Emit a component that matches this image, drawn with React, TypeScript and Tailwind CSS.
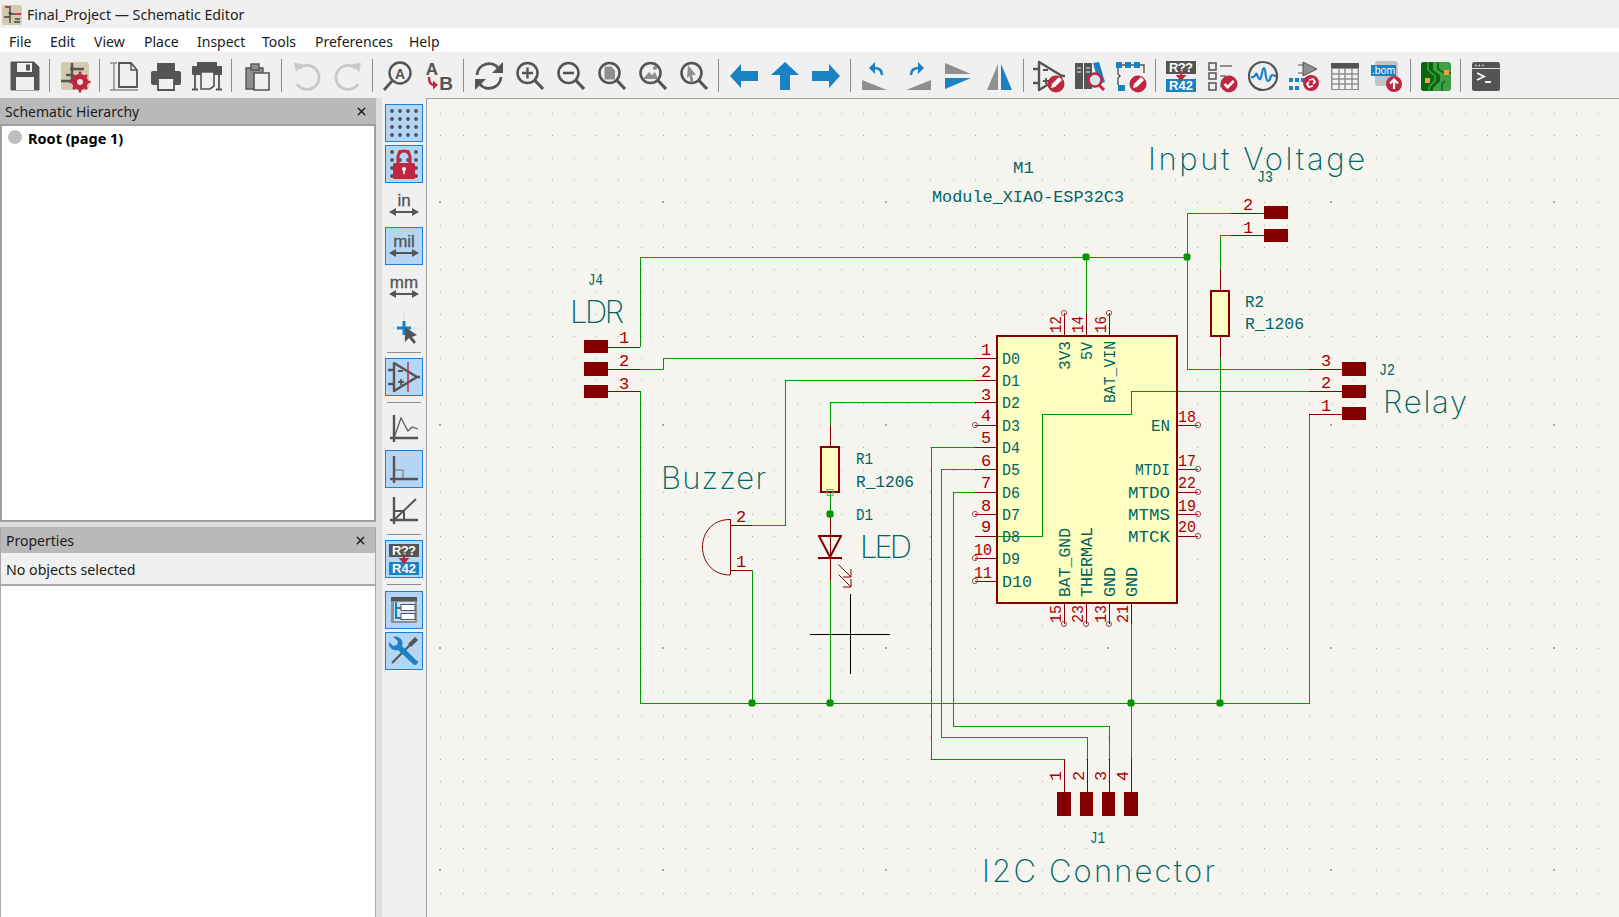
import React from "react";
import { X } from "lucide-react";

const D = "#545454", G = "#8f8f8f", B = "#1a81c4", R = "#bf2641", W = "#009600", P = "#840000", TC = "#006464", N = "#a90000", L = "#c8c8c8", BG = "#f0f0f0";

const Svg = ({ children, s = 32 }: { children: React.ReactNode; s?: number }) => (
  <svg width={s} height={s} viewBox="0 0 32 32" fill="none" className="overflow-visible">{children}</svg>
);
const Mag = ({ children }: { children?: React.ReactNode }) => (
  <Svg>
    <circle cx="13.5" cy="13" r="10" stroke={D} strokeWidth="2.6" />
    <path d="M21 20.5 29 29" stroke={D} strokeWidth="3.2" />
    {children}
  </Svg>
);
const Badge = ({ x = 23, y = 24, r = 8.5 }: { x?: number; y?: number; r?: number }) => (
  <circle cx={x} cy={y} r={r} fill={R} />
);
const Pencil = () => (
  <>
    <Badge />
    <path d="M18 28l1-4 7-7 3 3-7 7z" fill="#fff" />
  </>
);
const Check = () => (
  <>
    <Badge />
    <path d="M18.500 24l3.200 3.200 6-6.200" stroke="#fff" strokeWidth="2.600" />
  </>
);
const IconText = ({ x, y, s, c, w = 700, children, l }: { x: number; y: number; s: number; c: string; w?: number; children: React.ReactNode; l?: number }) => (
  <text x={x} y={y} fontSize={s} fill={c} fontWeight={w} fontFamily="Liberation Sans" textAnchor="middle" textLength={l}>{children}</text>
);
const Annot = () => (
  <Svg>
    <rect x="1" y="1" width="30" height="13" fill={D} />
    <IconText x={16} y={12} s={13} c="#fff" l={24}>R??</IconText>
    <rect x="1" y="19" width="30" height="13" fill={B} />
    <IconText x={16} y={30} s={13} c="#fff" l={24}>R42</IconText>
    <path d="M16 11v7" stroke={R} strokeWidth="2" />
    <path d="M10.500 15h11L16 21z" fill={R} />
  </Svg>
);
const Opamp = ({ red }: { red?: boolean }) => (
  <>
    <path d="M6 2 6 30 29 16z" stroke={D} strokeWidth="2.400" strokeLinejoin="round" />
    <path d="M0 9h6M0 23h6M29 16h3" stroke={D} strokeWidth="2.400" />
    <path d="M10 10h5M10 21h6M13 18v6" stroke={D} strokeWidth="1.800" />
    {red && <path d="M20 1v30" stroke={R} strokeWidth="1.400" />}
  </>
);

const top: (React.ReactNode | "sep")[] = [
  <Svg><path d="M2 2h23l5 5v23H2z" fill={D} stroke={D} strokeLinejoin="round" /><rect x="8" y="3" width="15" height="9" fill={BG} /><rect x="17" y="4.500" width="4" height="6" fill={D} /><rect x="7" y="17" width="18" height="13" fill={BG} /></Svg>,
  "sep",
  <Svg><rect x="2" y="2" width="28" height="28" rx="3" fill="#d4cab0" /><path d="M13 3v20M2 21h12M13 9h12M7 15h6" stroke={D} strokeWidth="2.400" /><circle cx="13" cy="9" r="2" fill={D} /><circle cx="13" cy="21" r="2" fill={D} /><circle cx="21" cy="22" r="8" fill={R} /><path d="M21 11.500v21M10.500 22h21M14 15l14 14M28 15 14 29" stroke={R} strokeWidth="2.600" /><circle cx="21" cy="22" r="3" fill="#f0e0e0" /></Svg>,
  "sep",
  <Svg><path d="M5 3v27M1 3h7M1 30h28" stroke={G} strokeWidth="1.500" /><path d="M10 3h12l6 7v17H10z" stroke={D} strokeWidth="1.800" /><path d="M22 3v7h6" stroke={D} strokeWidth="1.500" /></Svg>,
  <Svg><path d="M7 11V3h18v8" fill={D} /><path d="M3 11h26a2 2 0 0 1 2 2v10a2 2 0 0 1-2 2H3a2 2 0 0 1-2-2V13a2 2 0 0 1 2-2z" fill={D} /><path d="M8 18h16v12H8z" fill={BG} stroke={D} strokeWidth="1.800" /></Svg>,
  <Svg><rect x="1" y="6" width="30" height="9" fill={D} rx="1" /><path d="M6 6V2h20v4" fill={D} /><path d="M4 15v14M28 15v14M1 29.500h6M25 29.500h6" stroke={D} strokeWidth="1.800" /><path d="M10 12h13v14l-4 3h-9z" fill={BG} stroke={D} strokeWidth="1.600" /></Svg>,
  "sep",
  <Svg><path d="M5 8h17v21H5z" fill={G} stroke={D} strokeWidth="1.400" /><rect x="10" y="4" width="8" height="6" fill={G} stroke={D} strokeWidth="1.400" /><path d="M13 13h15v17H13z" fill={BG} stroke={D} strokeWidth="1.600" /></Svg>,
  "sep",
  <Svg><path d="M8 8.500A12 12 0 1 1 6 24" stroke={L} strokeWidth="2.800" /><path d="M3 3l9 1-7 8z" fill={L} /></Svg>,
  <Svg><path d="M24 8.500A12 12 0 1 0 26 24" stroke={L} strokeWidth="2.800" /><path d="M29 3l-9 1 7 8z" fill={L} /></Svg>,
  "sep",
  <Svg><circle cx="18" cy="13" r="10.500" stroke={D} strokeWidth="2.400" /><IconText x={18} y={18.500} s={14} c={D}>A</IconText><path d="M10 21 2 30" stroke={D} strokeWidth="2.800" /></Svg>,
  <Svg><IconText x={9} y={15} s={17} c={D}>A</IconText><IconText x={23} y={30} s={19} c={D}>B</IconText><path d="M6 17c0 6 2 8 5 8" stroke={R} strokeWidth="2.400" /><path d="M10 20.500l5 4.500-5 4.500z" fill={R} /></Svg>,
  "sep",
  <Svg><path d="M4 15A12 12 0 0 1 26 9" stroke={D} strokeWidth="2.800" /><path d="M30 2v11H19z" fill={D} /><path d="M28 17A12 12 0 0 1 6 23" stroke={D} strokeWidth="2.800" /><path d="M2 30V19h11z" fill={D} /></Svg>,
  <Mag><path d="M13.500 7.500v11M8 13h11" stroke={D} strokeWidth="2.400" /></Mag>,
  <Mag><path d="M8 13h11" stroke={D} strokeWidth="2.600" /></Mag>,
  <Mag><path d="M8.500 6.500h7l3.500 4v9H8.500z" fill={G} /></Mag>,
  <Mag><path d="M6 19l6-7 3 3 3-3 3 7z" fill={G} /><circle cx="18" cy="8" r="2" fill={G} /></Mag>,
  <Mag><path d="M10 5l8 10h-4l1.500 6-3 .5-1-5.500-2.500 2z" fill={G} /></Mag>,
  "sep",
  <Svg><path d="M2 16 13 4v7h17v10H13v7z" fill={B} /></Svg>,
  <Svg><path d="M16 2 30 15h-9v15H11V15H2z" fill={B} /></Svg>,
  <Svg><path d="M30 16 19 4v7H2v10h17v7z" fill={B} /></Svg>,
  "sep",
  <Svg><path d="M2 20 27 30H2z" fill={G} /><path d="M22 15c0-5-3-7-8-7" stroke={B} strokeWidth="2.600" /><path d="M15 2 9 8l6 6z" fill={B} /></Svg>,
  <Svg><path d="M30 20 5 30h25z" fill={G} /><path d="M10 15c0-5 3-7 8-7" stroke={B} strokeWidth="2.600" /><path d="M17 2l6 6-6 6z" fill={B} /></Svg>,
  <Svg><path d="M3 3v11h26z" fill={G} /><path d="M3 29V18h26z" fill={B} /></Svg>,
  <Svg><path d="M15 4v26H4z" fill={G} /><path d="M18 4v26h11z" fill={B} /></Svg>,
  "sep",
  <Svg><Opamp /><Pencil /></Svg>,
  <Svg><rect x="1" y="3" width="8" height="26" fill={D} /><rect x="10" y="3" width="8" height="26" fill={D} /><path d="M3 8h4M3 12h4M12 8h4M12 12h4" stroke={BG} strokeWidth="1.200" /><path d="M19 3l6-1 6 20-6 2z" fill={B} /><circle cx="21" cy="20" r="6.500" fill="#d8e8f2" stroke={R} strokeWidth="2.600" /><path d="M25 25l5 5" stroke={R} strokeWidth="3" /></Svg>,
  <Svg><rect x="1" y="2" width="6" height="6" fill={B} /><rect x="10" y="2" width="6" height="6" fill={B} /><rect x="19" y="2" width="6" height="6" fill={B} /><rect x="3" y="25" width="7" height="6" fill={B} /><path d="M3 8v6l2 2-2 2v7M25 5h4v8M7 5h3M16 5h3" stroke={D} strokeWidth="1.400" /><Pencil /></Svg>,
  "sep",
  <Annot />,
  <Svg><path d="M3 3h7v7H3zM3 13h7v6H3zM3 23h7v7H3z" stroke={D} strokeWidth="1.500" /><path d="M14 6h12M14 16h6M14 26h4" stroke={G} strokeWidth="2" /><Check /></Svg>,
  <Svg><circle cx="16" cy="16" r="14" stroke={D} strokeWidth="2.200" /><path d="M4 17c3 1 4-1 5-3s2 6 4 5 2-11 4-11 1 13 4 13 2-6 4-6 2 1 4 1" stroke={B} strokeWidth="2.200" /></Svg>,
  <Svg><path d="M15 2v14l14-7z" fill={G} stroke={D} /><path d="M15 5H10M15 13h-5" stroke={D} /><rect x="1" y="18" width="4" height="4" fill={B} /><rect x="7" y="18" width="4" height="4" fill={B} /><rect x="1" y="26" width="4" height="4" fill={B} /><rect x="7" y="26" width="4" height="4" fill={B} /><rect x="13" y="18" width="4" height="4" fill={B} /><circle cx="23" cy="23" r="8" fill={R} /><path d="M21 20l4-1 2 3-2 2M25 26l-4 1-2-3 2-2" stroke="#fff" strokeWidth="1.800" /></Svg>,
  <Svg><rect x="2" y="3" width="28" height="27" fill={G} /><rect x="2" y="3" width="28" height="5" fill={D} /><path d="M3.500 9h25v20h-25z" fill="#f4f4f4" /><path d="M10 8v22M16 8v22M23 8v22M3 14h26M3 19h26M3 24h26" stroke={G} strokeWidth="1.500" /></Svg>,
  <Svg><rect x="5" y="1" width="23" height="25" rx="3" fill="#c4c4c4" /><rect x="1" y="5" width="25" height="11" fill={B} /><text x="13.500" y="14" fontSize="10.500" fontFamily="Liberation Sans" fill="#fff" textAnchor="middle">.bom</text><circle cx="24" cy="24" r="8" fill={R} /><path d="M24 29v-9M20 23.500l4-4 4 4" stroke="#fff" strokeWidth="2.200" /></Svg>,
  "sep",
  <Svg><rect x="1" y="2" width="30" height="29" rx="3" fill="#3f9e46" /><path d="M1 5a3 3 0 0 1 3-3h9v8l7 5v6l-7 7v3H4a3 3 0 0 1-3-3z" fill="#0a680a" /><path d="M18 2v7l6 4h7M22 31v-7l3-3" stroke="#0a680a" strokeWidth="1.600" /><path d="M8 2v8l7 6v5l-6 6v4" stroke="#3f9e46" strokeWidth="1.600" /><rect x="24" y="10" width="5" height="5" fill="#eaa24a" /><rect x="5" y="18" width="5" height="5" fill="#eaa24a" /></Svg>,
  "sep",
  <Svg><rect x="2" y="2" width="28" height="29" rx="2.500" fill={D} /><path d="M2 8.500h28" stroke="#ddd" strokeWidth="1" /><path d="M5 5.500h1.500M8.500 5.500H10M12 5.500h1.500" stroke="#ddd" strokeWidth="1.500" /><path d="M7 13l7 3.500L7 20" stroke="#fff" strokeWidth="1.800" /><path d="M15 22h6" stroke="#fff" strokeWidth="1.800" /></Svg>,
];

const Unit = ({ t }: { t: string }) => (
  <Svg>
    <text x="16" y="17" fontSize="17" fontFamily="Liberation Sans" fill={D} textAnchor="middle" fontWeight="400" stroke={D} strokeWidth=".3">{t}</text>
    <path d="M3 23h26" stroke={D} strokeWidth="2" />
    <path d="M1 23l7-4v8zM31 23l-7-4v8z" fill={D} />
  </Svg>
);
const Dots = () => (
  <>
    {[4, 12, 20, 28].map((y) => [4, 12, 20, 28].map((x) => <circle key={x + "-" + y} cx={x} cy={y} r="1.900" fill={D} />))}
  </>
);
const Axes = ({ children }: { children: React.ReactNode }) => (
  <Svg>
    {children}
    <path d="M6 3v27M2 26h28" stroke={D} strokeWidth="2.400" />
  </Svg>
);

const side: ({ a?: boolean; i: React.ReactNode } | "sep" | "sep2")[] = [
  { a: true, i: <Svg><Dots /></Svg> },
  { a: true, i: <Svg><Dots /><path d="M10 15V9a6 6 0 0 1 12 0v6" stroke={R} strokeWidth="3" /><rect x="5" y="15" width="22" height="16" rx="1.500" fill={R} /><circle cx="16" cy="21" r="2" fill="#fff" /><path d="M16 21v5" stroke="#fff" strokeWidth="1.500" /></Svg> },
  { i: <Unit t="in" /> },
  { a: true, i: <Unit t="mil" /> },
  { i: <Unit t="mm" /> },
  { i: <Svg><path d="M16 1v30M1 16h30" stroke="#d8d8d8" /><path d="M16 9v14M9 16h14" stroke={B} strokeWidth="3" /><path d="M17 15l0 15 4-4 5 6 2-2-4-5 5-2z" fill={D} /></Svg> },
  "sep",
  { a: true, i: <Svg><Opamp red /></Svg> },
  "sep2",
  { i: <Axes><path d="M6 26 13 6l7 13 4-4 6 2" stroke={D} strokeWidth="1.200" /></Axes> },
  { a: true, i: <Axes><path d="M6 17h9v9" stroke={G} strokeWidth="1.400" /></Axes> },
  { i: <Axes><path d="M6 26 28 5M6 17h10v9" stroke={D} strokeWidth="2" /></Axes> },
  "sep",
  { a: true, i: <Annot /> },
  "sep2",
  { a: true, i: <Svg><rect x="3" y="3" width="26" height="26" fill={G} /><rect x="3" y="3" width="26" height="4" fill={D} /><rect x="6" y="8" width="21" height="19" fill="#cde2f5" /><path d="M8 8v16h5M8 14h5" stroke={B} strokeWidth="2.200" /><rect x="13" y="10.500" width="14" height="6" fill="#fff" stroke={D} /><rect x="13" y="19.500" width="14" height="6" fill="#fff" stroke={D} /></Svg> },
  { a: true, i: <Svg><path d="M4 28 22 10" stroke={D} strokeWidth="2" /><path d="M20 9l7-7 3 3-7 7z" fill={D} /><path d="M29 26 14 11A7 7 0 0 0 5 2l5 4-1 4-4 1-4-4a7 7 0 0 0 9 8l15 14a2 2 0 0 0 4-4z" fill={B} /></Svg> },
];

const Dot = ({ x, y }: { x: number; y: number }) => <rect x={x - 3.5} y={y - 3.5} width="7" height="7" rx="2" fill={W} />;
const Nc = ({ x, y }: { x: number; y: number }) => <circle cx={x} cy={y} r="2.600" stroke="#a05050" strokeWidth="1" fill="none" />;
type TP = { x: number; y: number; s?: number; w?: number; c?: string; a?: "start" | "middle" | "end"; r?: boolean; children: React.ReactNode };
const T = ({ x, y, s = 17, w, c = TC, a = "start", r, children }: TP) => (
  <text x={x} y={y} fontSize={s} fill={c} textAnchor={a} textLength={w} lengthAdjust={s > 20 ? "spacing" : "spacingAndGlyphs"} className={s > 20 ? "font-['Inter'] font-extralight" : "font-['Liberation_Mono'] font-normal"} transform={r ? `rotate(-90 ${x} ${y})` : undefined}>{children}</text>
);

const wires = [
  "M640 347V257H1187", "M640 369H663V358H975", "M640 391V703H1309V414", "M975 380H785V525H752", "M975 402H830V425",
  "M830 581V703", "M752 570V703", "M975 447H931V759H1064", "M975 469H941V737H1087V759", "M975 492H953V726H1109V759",
  "M1131 624V759", "M1086 257V313", "M1231 213H1187V369H1309", "M1231 235H1220V269", "M1309 391H1131V414H1042V536H975",
];
const pins = [
  "M608 347H640", "M608 369H640", "M608 391H640", "M730 525H752", "M730 570H752", "M830 425V447", "M830 514V581",
  "M1231 213H1264", "M1231 235H1264", "M1220 269V291", "M1220 336V358", "M1309 369H1342", "M1309 391H1342", "M1309 414H1342",
  "M1064 759V792", "M1087 759V792", "M1109 759V792", "M1131 759V792",
  "M1064 313V336", "M1086 313V336", "M1109 313V336", "M1064 603V624", "M1086 603V624", "M1109 603V624", "M1131 603V624",
];
const pads = [
  [584, 340, 24, 13], [584, 362, 24, 14], [584, 385, 24, 13], [1264, 206, 24, 13], [1264, 229, 24, 13],
  [1342, 362, 24, 14], [1342, 385, 24, 13], [1342, 407, 24, 13],
  [1057, 792, 14, 24], [1080, 792, 13, 24], [1102, 792, 13, 24], [1124, 792, 14, 24],
];
const left = [
  ["1", "D0", 358, 355], ["2", "D1", 380, 377], ["3", "D2", 402, 400], ["4", "D3", 425, 421], ["5", "D4", 447, 443], ["6", "D5", 469, 466],
  ["7", "D6", 492, 488], ["8", "D7", 514, 511], ["9", "D8", 536, 532], ["10", "D9", 558, 555], ["11", "D10", 581, 578],
] as const;
const right = [["18", "EN", 425, 422, 19], ["17", "MTDI", 469, 466, 35], ["22", "MTDO", 492, 488, 42], ["19", "MTMS", 514, 511, 42], ["20", "MTCK", 536, 532, 42]] as const;

const Schematic = () => {
  const dots: React.ReactNode[] = [];
  for (let i = -10; i < 43; i++)
    for (let j = -14; j < 22; j++) {
      const x = Math.round(663 + i * 22.27), y = Math.round(425 + j * 22.27);
      const m = (i + 100) % 10 === 0 && (j + 100) % 10 === 0;
      dots.push(<rect key={i + "_" + j} x={m ? x - 1 : x} y={m ? y - 1 : y} width={m ? 2 : 1} height={m ? 2 : 1} fill="#a8a8a8" />);
    }
  return (
    <svg width="1192" height="819" viewBox="427 98 1192 819" className="block">
      <g shapeRendering="crispEdges">
        {dots}
        <rect x="997" y="336" width="180" height="267" fill="#ffffc2" />
        <rect x="821" y="447" width="18" height="45" fill="#ffffc2" />
        <rect x="1211" y="291" width="18" height="45" fill="#ffffc2" />
        <g stroke={W} strokeWidth="1" fill="none">{wires.map((d) => <path key={d} d={d} />)}</g>
        <g stroke={P} strokeWidth="1" fill="none">
          {pins.map((d) => <path key={d} d={d} />)}
          {left.map(([n, , y]) => <path key={n} d={`M975 ${y}H997`} />)}
          {right.map(([n, , y]) => <path key={n} d={`M1177 ${y}H1198`} />)}
          <path d="M730 519V575" />
        </g>
        <path d="M830 492V514" stroke={W} strokeWidth="1" />
        <path d="M1220 358V703" stroke={W} strokeWidth="1" />
        <g fill={P}>{pads.map(([x, y, w, h]) => <rect key={x + "-" + y} x={x} y={y} width={w} height={h} />)}</g>
        <g stroke={P} strokeWidth="2" fill="none">
          <rect x="997" y="336" width="180" height="267" />
          <rect x="821" y="447" width="18" height="45" />
          <rect x="1211" y="291" width="18" height="45" />
          <path d="M818 536H842M818 557.500H842" />
        </g>
        <path d="M810 634H890M850 594V674" stroke="#000" strokeWidth="1" />
      </g>
      <path d="M819 536 830 557 841 536" stroke={P} strokeWidth="2" fill="none" />
      <path d="M730 519.500C712 519.500 702.500 533 702.500 547S712 575 730 575" stroke={P} strokeWidth="1" fill="none" />
      <path d="M838.500 564.500 851 577M851 569V577H843M838.500 574.500 851 587M851 579V587H843" stroke={P} strokeWidth="1" fill="none" />
      <rect x="827" y="489.500" width="6" height="6" stroke="#5cb85c" strokeWidth="1" fill="none" />
      <Dot x={1086} y={257} /><Dot x={1187} y={257} /><Dot x={830} y={514} /><Dot x={752} y={703} /><Dot x={830} y={703} /><Dot x={1131} y={703} /><Dot x={1220} y={703} />
      {[[975, 425], [975, 514], [975, 558], [975, 581], [1198, 425], [1198, 469], [1198, 492], [1198, 514], [1198, 536], [1064, 313], [1109, 313], [1064, 624], [1086, 624], [1109, 624]].map(([x, y]) => <Nc key={x + "-" + y} x={x} y={y} />)}

      <T x={1148} y={170} s={31} w={217}>Input Voltage</T>
      <T x={570} y={323} s={31} w={54}>LDR</T>
      <T x={661} y={489} s={31} w={105}>Buzzer</T>
      <T x={860} y={558} s={31} w={52}>LED</T>
      <T x={1383} y={413} s={31} w={84}>Relay</T>
      <T x={982} y={882} s={31} w={233}>I2C Connector</T>
      <T x={1013} y={173} w={21}>M1</T>
      <T x={932} y={202} w={192}>Module_XIAO-ESP32C3</T>
      <T x={1257} y={182} w={16}>J3</T>
      <T x={588} y={285} w={15}>J4</T>
      <T x={1379} y={375} w={16}>J2</T>
      <T x={1090} y={843} w={15}>J1</T>
      <T x={856} y={464} w={17}>R1</T>
      <T x={856} y={487} w={58}>R_1206</T>
      <T x={856} y={520} w={17}>D1</T>
      <T x={1245} y={307} w={19}>R2</T>
      <T x={1245} y={329} w={59}>R_1206</T>

      {left.map(([n, l, y, b]) => (
        <React.Fragment key={n}>
          <T x={n.length > 1 ? 992 : 986} y={b} c={N} a={n.length > 1 ? "end" : "middle"} w={n.length > 1 ? 18 : undefined}>{n}</T>
          <T x={1002} y={y + 6} w={l.length > 2 ? 30 : 18}>{l}</T>
        </React.Fragment>
      ))}
      {right.map(([n, l, y, b, w]) => (
        <React.Fragment key={n}>
          <T x={1178} y={b} c={N} w={18}>{n}</T>
          <T x={1170} y={y + 6} a="end" w={w}>{l}</T>
        </React.Fragment>
      ))}
      <T x={1070} y={370} r w={29}>3V3</T>
      <T x={1092} y={360} r w={18}>5V</T>
      <T x={1115} y={403} r w={62}>BAT_VIN</T>
      <T x={1070} y={597} r w={69}>BAT_GND</T>
      <T x={1092} y={597} r w={70}>THERMAL</T>
      <T x={1115} y={597} r w={30}>GND</T>
      <T x={1137} y={597} r w={30}>GND</T>
      <T x={1061} y={333} r c={N} w={17}>12</T>
      <T x={1083} y={333} r c={N} w={17}>14</T>
      <T x={1106} y={333} r c={N} w={17}>16</T>
      <T x={1061} y={623} r c={N} w={18}>15</T>
      <T x={1083} y={623} r c={N} w={18}>23</T>
      <T x={1106} y={623} r c={N} w={18}>13</T>
      <T x={1128} y={623} r c={N} w={18}>21</T>
      <T x={624} y={343} c={N} a="middle">1</T>
      <T x={624} y={366} c={N} a="middle">2</T>
      <T x={624} y={389} c={N} a="middle">3</T>
      <T x={741} y={522} c={N} a="middle">2</T>
      <T x={741} y={567} c={N} a="middle">1</T>
      <T x={1248} y={210} c={N} a="middle">2</T>
      <T x={1248} y={233} c={N} a="middle">1</T>
      <T x={1326} y={366} c={N} a="middle">3</T>
      <T x={1326} y={388} c={N} a="middle">2</T>
      <T x={1326} y={411} c={N} a="middle">1</T>
      <T x={1061} y={776} r c={N} a="middle">1</T>
      <T x={1084} y={776} r c={N} a="middle">2</T>
      <T x={1106} y={776} r c={N} a="middle">3</T>
      <T x={1128} y={776} r c={N} a="middle">4</T>
    </svg>
  );
};

const PanelHead = ({ t }: { t: string }) => (
  <div className="flex h-[26px] shrink-0 items-center justify-between bg-[#b9b9b9] pl-[5px] pr-[8px]">
    <span className="pt-[2px]">{t}</span>
    <X size={13} strokeWidth={2.2} color="#111" />
  </div>
);

export default function App() {
  return (
    <div className="flex h-[917px] w-[1619px] flex-col overflow-hidden bg-[#f0f0f0] font-['Noto_Sans'] text-[14px] leading-none text-[#1a1a1a]">
      <div className="flex h-[28px] shrink-0 items-center gap-[5px] pl-[2px] pt-[1px]">
        <svg width="20" height="20" viewBox="0 0 20 20">
          <rect width="20" height="20" rx="2" fill="#d4cab0" />
          <path d="M8 1v6M2 12h6M8 7v11M8 9h8M13 14h5M12 17h6" stroke="#444" strokeWidth="1.400" />
          <path d="M3 2h5M13 9h6" stroke="#d8334f" strokeWidth="2" />
          <circle cx="8" cy="8" r="1.600" fill="#444" />
        </svg>
        <span className="pt-[2px] text-[14.2px] text-[#222]">Final_Project — Schematic Editor</span>
      </div>
      <div className="flex h-[24px] shrink-0 items-center bg-white pl-[9px] pt-[3px]">
        {[["File", "w-[41px]"], ["Edit", "w-[44px]"], ["View", "w-[50px]"], ["Place", "w-[53px]"], ["Inspect", "w-[65px]"], ["Tools", "w-[53px]"], ["Preferences", "w-[94px]"], ["Help", "w-auto"]].map(([t, w]) => (
          <span key={t} className={w}>{t}</span>
        ))}
      </div>
      <div className="flex h-[46px] shrink-0 items-center pl-[4px] pt-[1px]">
        {top.map((it, i) =>
          it === "sep" ? (
            <div key={i} className="flex h-[33px] w-[9px] shrink-0 justify-center"><div className="h-full w-px bg-[#8c8c8c]" /></div>
          ) : (
            <div key={i} className="flex h-[36px] w-[41px] shrink-0 items-center justify-center">{it}</div>
          )
        )}
      </div>
      <div className="flex min-h-0 flex-1">
        <div className="flex w-[376px] shrink-0 flex-col bg-[#dfdfdf]">
          <div className="flex h-[424px] shrink-0 flex-col">
            <PanelHead t="Schematic Hierarchy" />
            <div className="flex flex-1 items-start gap-[6px] border-2 border-[#a0a0a0] bg-white pl-[6px] pt-[4px]">
              <span className="h-[14px] w-[14px] rounded-full bg-[#bdbdbd]" />
              <span className="pt-[1px] text-[14.500px] font-bold text-black">Root (page 1)</span>
            </div>
          </div>
          <div className="mt-[5px] flex min-h-0 flex-1 flex-col border-l border-r border-[#a8a8a8]">
            <PanelHead t="Properties" />
            <div className="flex h-[31px] shrink-0 items-center bg-[#f0f0f0] pl-[5px] pt-[3px] text-[14.200px]">No objects selected</div>
            <div className="flex-1 border-t-2 border-[#a8a8a8] bg-white" />
          </div>
        </div>
        <div className="w-[6px] shrink-0 bg-[#dfdfdf]" />
        <div className="flex w-[44px] shrink-0 flex-col items-center gap-[3px] pr-[1px] pt-[6px]">
          {side.map((it, i) =>
            it === "sep" || it === "sep2" ? (
              <div key={i} className={it === "sep" ? "my-[2px] h-px w-[34px] shrink-0 bg-[#8c8c8c]" : "my-[3px] h-px w-[34px] shrink-0 bg-[#8c8c8c]"} />
            ) : (
              <div key={i} className={it.a ? "flex h-[38px] w-[38px] shrink-0 items-center justify-center border border-[#1a81d8] bg-[#b4d6f4]" : "flex h-[38px] w-[38px] shrink-0 items-center justify-center"}>{it.i}</div>
            )
          )}
        </div>
        <div className="min-w-0 flex-1 overflow-hidden border-l border-t border-[#a0a0a0] bg-[#f5f4ef]">
          <div className="-mt-px"><Schematic /></div>
        </div>
      </div>
    </div>
  );
}
